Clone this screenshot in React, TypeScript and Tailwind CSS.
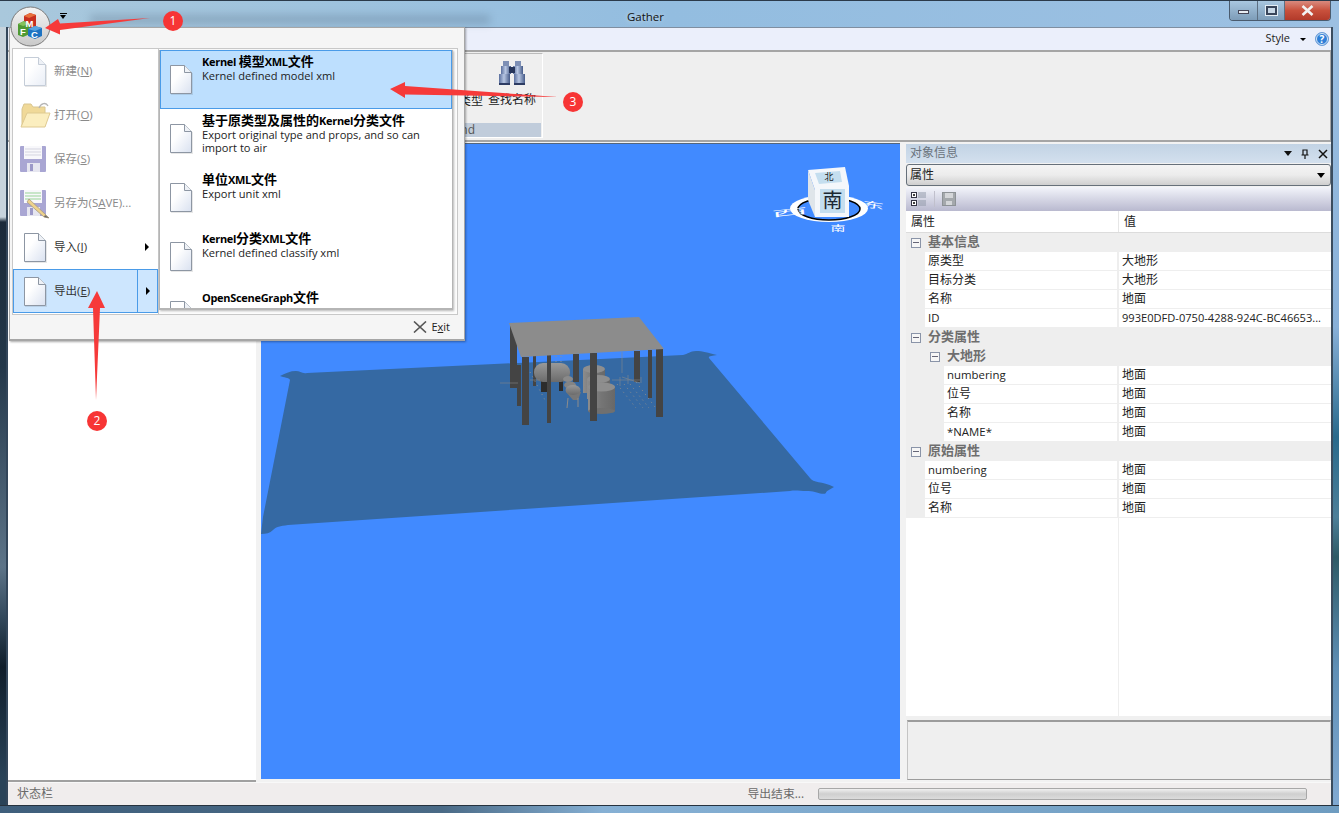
import React from "react";

const FONT = "font-['Open_Sans','Noto_Sans_CJK_SC',sans-serif]";

function Mix({ t, cjk }: { t: string; cjk: string }) {
  return (
    <>
      {t.split(/([\u4e00-\u9fff]+)/).map((s, i) =>
        i % 2 ? (
          <span key={i} className={cjk}>
            {s}
          </span>
        ) : (
          <React.Fragment key={i}>{s}</React.Fragment>
        )
      )}
    </>
  );
}

function DocIcon({ faded = false }: { faded?: boolean }) {
  const id = faded ? "docF" : "docN";
  return (
    <svg width="24" height="31" viewBox="0 0 24 31" className="shrink-0">
      <defs>
        <linearGradient id={id} x1="0" y1="0" x2="1" y2="1">
          <stop offset="0.35" stopColor="#ffffff" />
          <stop offset="1" stopColor={faded ? "#e8edf6" : "#d9e1f0"} />
        </linearGradient>
      </defs>
      <path d="M1.5 1.5H15.5L22.5 8.5V29.5H1.5Z" fill={`url(#${id})`} stroke={faded ? "#c5cdd8" : "#8d96a3"} />
      <path d="M15.5 1.5V8.5H22.5" fill="#eef1f6" stroke={faded ? "#c5cdd8" : "#8d96a3"} />
      <path d="M2 30.5H23.5V9" fill="none" stroke="#00000018" />
    </svg>
  );
}

function FolderIcon() {
  return (
    <svg width="31" height="28" viewBox="0 0 31 28" className="shrink-0">
      <path d="M2 8V25H25V6H13L11 3H4Z" fill="#f0d998" stroke="#d9c690" />
      <path d="M1 26L7 12H30L25 26Z" fill="#fbeebf" stroke="#dfca91" />
      <path d="M19 7C21 2 26 1 28 5" fill="none" stroke="#b5b5b5" strokeWidth="1.3" />
    </svg>
  );
}

function FloppyIcon({ pencil = false }: { pencil?: boolean }) {
  return (
    <svg width="32" height="31" viewBox="0 0 32 31" className="shrink-0">
      <rect x="1" y="2" width="26" height="26" rx="1" fill="#a9a6d3" />
      <rect x="5" y="2" width="18" height="13" fill="#f8f8fb" />
      <path d="M6 5H22M6 8H22M6 11H22" stroke={pencil ? "#98d398" : "#d5d5e0"} />
      <rect x="8" y="19" width="13" height="9" fill="#e6e6f0" />
      <rect x="11" y="20" width="3" height="7" fill="#9c99c8" />
      {pencil && (
        <g>
          <path d="M10 11L27 27L30 30L25 29L8 14Z" fill="#eed28c" stroke="#a89c80" strokeWidth="0.8" />
          <path d="M26 27L30 30L25 29Z" fill="#666" />
        </g>
      )}
    </svg>
  );
}

function LeftItem({ icon, children, faded = false, arrow = false, active = false }: { icon: React.ReactNode; children: React.ReactNode; faded?: boolean; arrow?: boolean; active?: boolean }) {
  return (
    <div className={`h-[44px] flex items-center relative ${active ? "bg-[#cde6fe] border border-[#4a9be8]" : "border border-transparent"}`}>
      <div className="w-[32px] ml-[6px] flex justify-center -translate-x-[1px]">{icon}</div>
      <span className={`ml-[2px] text-[11.5px] ${faded ? "text-[#8a8a8a]" : "text-[#333]"}`}>{children}</span>
      {arrow && (
        <div className={`absolute right-0 top-0 bottom-0 w-[20px] flex items-center justify-center ${active ? "border-l border-[#4a9be8]" : ""}`}>
          <div className="w-0 h-0 border-y-[4px] border-y-transparent border-l-[4px] border-l-black" />
        </div>
      )}
    </div>
  );
}

function RightItem({ title, desc, active = false, clipped = false }: { title: string; desc?: React.ReactNode; active?: boolean; clipped?: boolean }) {
  return (
    <div className={`${clipped ? "h-[23px] overflow-hidden" : "h-[59px]"} flex shrink-0 pl-[8px] ${active ? "bg-[#bddffe] border border-[#4a9be8]" : "border border-transparent"}`}>
      <div className="pt-[13px]">
        <DocIcon />
      </div>
      <div className="ml-[9px] pt-[2px] text-[#222] w-[245px]">
        <div className="font-bold leading-[16px] text-[11px] tracking-[-0.3px] text-black">
          <Mix t={title} cjk="text-[13px] tracking-normal" />
        </div>
        {desc && <div className="mt-[-1px] leading-[13px] text-[11.1px]">{desc}</div>}
      </div>
    </div>
  );
}

function Collapse() {
  return (
    <div className="w-[10px] h-[10px] border border-[#8a94a8] bg-[#f6f6f6] flex items-center justify-center shrink-0">
      <div className="w-[6px] h-[1px] bg-[#667]" />
    </div>
  );
}

function GroupRow({ label, indent = 0 }: { label: string; indent?: number }) {
  return (
    <div className="h-[19px] bg-[#eeeeee] flex items-center shrink-0" style={{ paddingLeft: 5 + indent }}>
      <Collapse />
      <span className="ml-[7px] font-bold text-[#6e6e6e] text-[13px] leading-[17px] -mt-[3px]">{label}</span>
    </div>
  );
}

function ItemRow({ name, value, gutter = 19, valueCls = "" }: { name: string; value: string; gutter?: number; valueCls?: string }) {
  return (
    <div className="h-[19px] flex shrink-0 text-[11.4px] text-[#222] border-b border-[#eeeeee] leading-[18px]">
      <div className="bg-[#eeeeee] -mb-[1px]" style={{ width: gutter }} />
      <div className="flex-1 min-w-0 pl-[3px] border-r-2 border-[#eeeeee]">
        <Mix t={name} cjk="text-[12px]" />
      </div>
      <div className={`w-[212px] pl-[3px] whitespace-nowrap overflow-hidden ${valueCls}`}>
        <Mix t={value} cjk="text-[12px]" />
      </div>
    </div>
  );
}

function Scene() {
  return (
    <svg className="w-full h-full block" viewBox="261 144 639 635">
      <defs>
        <linearGradient id="tank" x1="0" y1="0" x2="1" y2="0">
          <stop offset="0" stopColor="#8c8c8c" />
          <stop offset="0.5" stopColor="#757575" />
          <stop offset="1" stopColor="#686868" />
        </linearGradient>
        <linearGradient id="vessel" x1="0" y1="0" x2="0" y2="1">
          <stop offset="0" stopColor="#999" />
          <stop offset="1" stopColor="#6b6b6b" />
        </linearGradient>
      </defs>
      <path
        d="M290 380C289 377 284 378 280 376C286 373 290 371 296 371C300 371 302 374 307 373L683 355C688 354 690 351 696 351C703 351 708 353 717 355C712 356 708 356 709 358L810 478C813 483 822 481 834 487C829 490 826 491 826 493C822 496 815 490 807 491C800 491 795 490 790 491L288 525C280 526 276 527 273 530C270 533 266 534 261 534L263 517Z"
        fill="#3569a3"
      />
      {/* back columns */}
      <rect x="510" y="326" width="7" height="62" fill="#444" />
      <rect x="517" y="365" width="4" height="41" fill="#444" />
      <rect x="533" y="355" width="3" height="31" fill="#444" />
      <rect x="573" y="354" width="6" height="28" fill="#444" />
      <rect x="634" y="351" width="6" height="31" fill="#444" />
      <rect x="648" y="350" width="4" height="48" fill="#444" />
      {/* vessels */}
      <rect x="541" y="380" width="6" height="12" fill="#2c2c2c" />
      <rect x="559" y="380" width="4" height="11" fill="#2c2c2c" />
      <rect x="534" y="363" width="36" height="19" rx="9" fill="url(#vessel)" />
      <ellipse cx="568" cy="379" rx="5" ry="3" fill="#8a8a8a" />
      <ellipse cx="570" cy="385" rx="6" ry="3.5" fill="#848484" />
      <path d="M566 392L573 400H578L581 392Z" fill="#777" />
      <ellipse cx="573" cy="390" rx="7.5" ry="5" fill="url(#vessel)" />
      <path d="M568 398L567 408M578 398L578 407" stroke="#8c8c8c" />
      {/* tanks */}
      <rect x="583" y="369" width="22" height="24" fill="url(#tank)" />
      <ellipse cx="594" cy="369" rx="11" ry="4" fill="#8e8e8e" />
      <rect x="587" y="379" width="23" height="20" fill="url(#tank)" />
      <ellipse cx="598.5" cy="379" rx="11.5" ry="4" fill="#8e8e8e" />
      <rect x="588" y="387" width="27" height="24" fill="url(#tank)" />
      <ellipse cx="601.5" cy="411" rx="13.5" ry="3" fill="#707070" />
      <ellipse cx="601.5" cy="387" rx="13.5" ry="4.5" fill="#8e8e8e" />
      {/* pipes */}
      <g stroke="#8a8a8a" strokeWidth="0.7" fill="none" opacity="0.8">
        <path d="M500 383H518M530 380H540M612 380H640M622 377L640 383" />
        <path d="M620 377V386M628 375V384M641 377V383M622 352V373" />
      </g>
      <g stroke="#8e8e8e" strokeWidth="1" fill="none" strokeDasharray="1 4">
        <path d="M624 384L643 408M630 384L649 408M636 382L655 407M617 384L636 408" />
        <path d="M530 372L545 400M556 362V356M561 362V356" />
      </g>
      {/* front columns */}
      <rect x="522" y="357" width="7" height="68" fill="#444" />
      <rect x="547" y="355" width="4" height="68" fill="#444" />
      <rect x="590" y="353" width="7" height="68" fill="#444" />
      <rect x="656" y="349" width="7" height="68" fill="#444" />
      <polygon points="509,323 639,317 664,349 521,357" fill="#8c8c8c" />
      {/* compass */}
      <ellipse cx="829" cy="208.5" rx="39" ry="13.5" fill="#fff" />
      <ellipse cx="829" cy="209" rx="31" ry="11" fill="#418aff" stroke="#000" strokeWidth="1.5" />
      <polygon points="808,170 845,167 849,186 815,190" fill="#f4f7fb" />
      <polygon points="815,173 840,171 842,182 819,184" fill="#c4deef" />
      <polygon points="808,170 815,190 815,217 808,200" fill="#dfe5ea" />
      <rect x="815" y="186" width="34" height="31" fill="#f4f7fb" />
      <rect x="820" y="189" width="25" height="24" fill="#c4deef" />
      <text x="832.5" y="208" textAnchor="middle" fontSize="20" fill="#1c2833" fontFamily="'Noto Sans CJK SC',sans-serif">南</text>
      <text x="829" y="180" textAnchor="middle" fontSize="9" fill="#222" fontFamily="'Noto Sans CJK SC',sans-serif">北</text>
      <g fill="#fff" fontSize="8" fontFamily="'Noto Sans CJK SC',sans-serif" textAnchor="middle">
        <text x="790" y="215" textLength="36" lengthAdjust="spacingAndGlyphs" transform="rotate(-6 790 215)">西</text>
        <text x="873" y="208" textLength="22" lengthAdjust="spacingAndGlyphs" transform="rotate(8 873 208)">东</text>
        <text x="838" y="231" textLength="15" lengthAdjust="spacingAndGlyphs">南</text>
      </g>
    </svg>
  );
}

function Arrows() {
  return (
    <svg className="absolute inset-0 pointer-events-none" width="1339" height="813" viewBox="0 0 1339 813">
      <polygon points="150,18 60,23.5 58,19 45,28 60,34.5 60,30" fill="#f63a3a" />
      <polygon points="96,400 100,308 105,308 97,291 88,308 93,308" fill="#f63a3a" />
      <polygon points="558,97 405,86 405,82 390,89 405,98 405,94.5" fill="#f63a3a" />
    </svg>
  );
}

function Badge({ n, cls }: { n: number; cls: string }) {
  return (
    <div className={`absolute w-[20px] h-[20px] rounded-full bg-[#f73535] text-white text-[12px] flex items-center justify-center ${cls}`}>{n}</div>
  );
}

function AppMenu() {
  return (
    <div className="absolute left-[9px] top-[27px] w-[456px] h-[314px] bg-[#f5f5f5] border border-[#a6a6a6] border-b-2 shadow-[1px_1px_2px_#0005] flex flex-col">
      <div className="h-[20px] shrink-0" />
      <div className="flex h-[267px] ml-[2px] mr-[3px] shrink-0 items-start">
        <div className="w-[146px] h-[267px] bg-white border border-[#c8c8c8] border-r-0 shrink-0">
          <LeftItem icon={<DocIcon faded />} faded>
            新建(<u>N</u>)
          </LeftItem>
          <LeftItem icon={<FolderIcon />} faded>
            打开(<u>O</u>)
          </LeftItem>
          <LeftItem icon={<FloppyIcon />} faded>
            保存(<u>S</u>)
          </LeftItem>
          <LeftItem icon={<FloppyIcon pencil />} faded>
            另存为(S<u>A</u>VE)...
          </LeftItem>
          <LeftItem icon={<DocIcon />} arrow>
            导入(<u>I</u>)
          </LeftItem>
          <LeftItem icon={<DocIcon />} arrow active>
            导出(<u>E</u>)
          </LeftItem>
        </div>
        <div className="w-[300px] h-[267px] bg-[#fcfcfc] border border-[#c8c8c8] pt-[1px] pr-[4px] pb-[4px] shrink-0 relative">
          <div className="h-full bg-white border-l border-[#b5b5b5] border-r border-b-2 shadow-[1px_1px_2px_#0004] flex flex-col overflow-hidden">
            <RightItem active title="Kernel 模型XML文件" desc="Kernel defined model xml" />
            <RightItem title="基于原类型及属性的Kernel分类文件" desc={<>Export original type and props, and so can<br />import to air</>} />
            <RightItem title="单位XML文件" desc="Export unit xml" />
            <RightItem title="Kernel分类XML文件" desc="Kernel defined classify xml" />
            <RightItem clipped title="OpenSceneGraph文件" />
          </div>
        </div>
      </div>
      <div className="flex-1 flex items-center justify-end pr-[14px] text-[11px] text-[#222] gap-[4px]">
        <svg width="14" height="12" viewBox="0 0 14 12">
          <path d="M1 0.5L13 11.5M13 0.5L1 11.5" stroke="#555" strokeWidth="1.6" />
        </svg>
        <span>
          E<u>x</u>it
        </span>
      </div>
    </div>
  );
}

function AppButton() {
  return (
    <svg className="absolute left-[10px] top-[6px]" width="41" height="41" viewBox="0 0 41 41">
      <defs>
        <linearGradient id="orb" x1="0" y1="0" x2="0" y2="1">
          <stop offset="0" stopColor="#f4f4f4" />
          <stop offset="1" stopColor="#c9c9c9" />
        </linearGradient>
      </defs>
      <circle cx="20.5" cy="20.5" r="19.5" fill="url(#orb)" stroke="#7a7a7a" />
      <polygon points="14,10 20,7 26,9 26,20 19,23 14,21" fill="#c83020" />
      <polygon points="14,10 20,7 26,9 19,12" fill="#e8703c" />
      <polygon points="8,18 14,15 20,18 20,28 13,31 8,29" fill="#4f9a33" />
      <polygon points="8,18 14,15 20,18 13,20" fill="#86c25c" />
      <polygon points="18,23 25,20 32,22 32,30 25,33 18,30" fill="#1d73c2" />
      <polygon points="18,23 25,20 32,22 25,25" fill="#5aa5e0" />
      <g fontFamily="'Liberation Sans',sans-serif" fontWeight="700" fill="#fff" fontSize="9.5" textAnchor="middle">
        <text x="19.5" y="20.5">M</text>
        <text x="13" y="28.5">F</text>
        <text x="24.5" y="31.5">C</text>
      </g>
    </svg>
  );
}

function Binoculars() {
  return (
    <svg width="28" height="25" viewBox="0 0 28 25">
      <defs>
        <linearGradient id="bino" x1="0" y1="0" x2="1" y2="0">
          <stop offset="0" stopColor="#5a6f9e" />
          <stop offset="0.45" stopColor="#b7c6e2" />
          <stop offset="1" stopColor="#455a88" />
        </linearGradient>
      </defs>
      <rect x="5" y="0" width="6" height="5" fill="#7d8fb5" />
      <rect x="17" y="0" width="6" height="5" fill="#7d8fb5" />
      <rect x="3" y="5" width="10" height="8" fill="url(#bino)" />
      <rect x="15" y="5" width="10" height="8" fill="url(#bino)" />
      <rect x="11" y="6" width="6" height="6" fill="#26355a" />
      <rect x="1" y="13" width="11" height="11" fill="url(#bino)" />
      <rect x="16" y="13" width="11" height="11" fill="url(#bino)" />
      <rect x="1" y="22" width="11" height="2" fill="#2d3c63" />
      <rect x="16" y="22" width="11" height="2" fill="#2d3c63" />
    </svg>
  );
}

export default function App() {
  return (
    <div className={`relative w-[1339px] h-[813px] overflow-hidden flex flex-col ${FONT}`}>
      {/* Title bar */}
      <div className="h-[27px] shrink-0 flex bg-gradient-to-r from-[#a9c8dc] via-[#93bde0] to-[#9cc0e2] border-t border-[#2b3a4a] relative">
        <div className="absolute left-[90px] top-[14px] w-[400px] h-[9px] bg-[#51667c] opacity-30 blur-[4px]" />
        <div className="flex-1 text-center text-[11.5px] text-[#111] pt-[7px] pl-[62px] relative [text-shadow:0_0_5px_#ffffff99]">Gather</div>
        <div className="flex h-[20px] mr-[8px] w-[102px] border border-t-0 border-[#4a5b6e] rounded-b-[4px] overflow-hidden relative">
          <div className="w-[28px] border-r border-[#5d6f82] bg-gradient-to-b from-[#a9c7e0] to-[#7d9cb8] flex items-center justify-center">
            <div className="w-[11px] h-[4px] mt-[3px] bg-[#e8edf3] border border-[#445]" />
          </div>
          <div className="w-[27px] border-r border-[#5d6f82] bg-gradient-to-b from-[#a9c7e0] to-[#7d9cb8] flex items-center justify-center">
            <div className="w-[11px] h-[9px] border-2 border-[#39455a] bg-[#c9d8e6] outline outline-[#e4edf5]" />
          </div>
          <div className="flex-1 bg-gradient-to-b from-[#d98a7e] via-[#c8503c] to-[#b23a2a] flex items-center justify-center">
            <svg width="13" height="11" viewBox="0 0 13 11">
              <path d="M1.5 1L11.5 10M11.5 1L1.5 10" stroke="#f2f2f2" strokeWidth="2.6" />
            </svg>
          </div>
        </div>
      </div>

      <div className="flex-1 min-h-0 flex">
        {/* Left frame */}
        <div className="w-[8px] shrink-0 bg-[linear-gradient(180deg,#c7d3dc_0px,#c7d3dc_190px,#1b2a39_195px,#24384a_340px,#5d7488_540px,#33495c_590px,#0f1d2a_640px,#2a4358_750px)] border-r-2 border-[#33465a]" />
        {/* Inner client area */}
        <div className="flex-1 min-w-0 flex flex-col">
          {/* Tab strip */}
          <div className="h-[23px] shrink-0 bg-[#ebeffb] border-t border-[#7f8ea0] flex items-center justify-end pr-[2px] text-[11px] text-[#222]">
            <span className="-mt-[1px]">Style</span>
            <div className="ml-[10px] w-0 h-0 border-x-[3px] border-x-transparent border-t-[3px] border-t-black" />
            <div className="ml-[9px] w-[14px] h-[14px] rounded-full bg-[#2f7fd8] border border-[#6f9fd8] outline outline-[#d8e6f5] -outline-offset-2 text-white text-[10px] font-bold flex items-center justify-center">?</div>
          </div>
          {/* Ribbon */}
          <div className="h-[92px] shrink-0 bg-[#efefef] border-y-2 border-[#a5a5a5] border-r pt-[1px] pb-[1px]">
            <div className="ml-[292px] w-[243px] h-[85px] border border-t-[#bbb] border-l-[#bbb] border-r-white border-b-white flex flex-col">
              <div className="flex-1 flex justify-end pr-[6px] gap-[5px] text-[12px] text-[#222] pt-[7px]">
                <div className="flex flex-col items-center">
                  <div className="h-[25px]" />
                  <div className="mt-[6px]">查找类型</div>
                </div>
                <div className="flex flex-col items-center">
                  <Binoculars />
                  <div className="mt-[5px]">查找名称</div>
                </div>
              </div>
              <div className="h-[14px] bg-[#c0ccdb] text-[12px] text-[#555] leading-[14px] text-right pr-[66px] mr-[1px]">Command</div>
            </div>
          </div>

          {/* Main */}
          <div className="flex-1 min-h-0 flex bg-[#f2f2f2]">
            <div className="w-[248px] shrink-0 bg-white border-b-2 border-[#a0a0a0]" />
            <div className="w-[5px] shrink-0 bg-[#f2f2f2]" />
            <div className="w-[639px] shrink-0 pt-[1px] pb-[3px]">
              <div className="w-full h-[636px] bg-[#418aff] border-t border-[#55667c]">
                <Scene />
              </div>
            </div>
            <div className="flex-1 min-w-0 ml-[6px] flex flex-col pt-[2px] pb-[2px]">
              <div className="h-[19px] shrink-0 bg-gradient-to-b from-[#c2d3e4] to-[#d3e0ee] flex items-center pl-[4px] pr-[3px] text-[12px] leading-[16px] text-[#6a737c]">
                <span className="flex-1 -mt-[2px]">对象信息</span>
                <div className="w-0 h-0 border-x-[4px] border-x-transparent border-t-[5px] border-t-[#111]" />
                <svg width="10" height="10" viewBox="0 0 10 10" className="ml-[8px]">
                  <path d="M3 1H7V6H3ZM1.5 6H8.5M5 6V10" stroke="#111" fill="none" strokeWidth="1.2" />
                </svg>
                <svg width="10" height="10" viewBox="0 0 10 10" className="ml-[8px]">
                  <path d="M1 1L9 9M9 1L1 9" stroke="#111" strokeWidth="1.5" />
                </svg>
              </div>
              <div className="h-[22px] shrink-0 mt-[1px] rounded-[3px] border border-[#66707a] bg-gradient-to-b from-[#f4f4f4] via-[#ececec] to-[#cfcfcf] flex items-center pl-[3px] pr-[5px] text-[12px] text-[#222]">
                <span className="flex-1">属性</span>
                <div className="w-0 h-0 border-x-[4px] border-x-transparent border-t-[5px] border-t-black" />
              </div>
              <div className="h-[24px] shrink-0 bg-gradient-to-b from-[#f3f5fb] to-[#b9b9cf] flex items-center pl-[5px] mt-[1px]">
                <svg width="16" height="16" viewBox="0 0 16 16">
                  <rect x="0.5" y="1.5" width="5" height="5" fill="#fff" stroke="#334" />
                  <rect x="0.5" y="9.5" width="5" height="5" fill="#fff" stroke="#334" />
                  <path d="M2 4H4M3 3V5M2 12H4M3 11V13" stroke="#000" />
                  <path d="M7 2H15M7 4H15M7 6H15M7 10H15M7 12H15M7 14H15" stroke="#9098a8" />
                </svg>
                <div className="w-[1px] h-[16px] bg-[#c0c0cc] ml-[7px]" />
                <svg width="14" height="14" viewBox="0 0 14 14" className="ml-[7px]">
                  <rect x="0.5" y="0.5" width="13" height="13" fill="#a4a8ac" stroke="#8d9296" />
                  <rect x="3" y="1" width="8" height="5" fill="#d4d6d9" />
                  <rect x="4" y="9" width="6" height="4" fill="#d4d6d9" />
                </svg>
              </div>
              <div className="h-[22px] shrink-0 bg-white flex text-[12px] text-[#222] border-b border-[#dcdcdc] leading-[22px]">
                <div className="w-[213px] pl-[5px] border-r border-[#e6e6e6]">属性</div>
                <div className="pl-[5px]">值</div>
              </div>
              <div className="flex-1 min-h-0 bg-white flex flex-col relative">
                <div className="absolute left-[212px] top-0 bottom-0 w-[1px] bg-[#eeeeee]" />
                <div className="relative flex flex-col">
                  <GroupRow label="基本信息" />
                  <ItemRow name="原类型" value="大地形" />
                  <ItemRow name="目标分类" value="大地形" />
                  <ItemRow name="名称" value="地面" />
                  <ItemRow name="ID" value="993E0DFD-0750-4288-924C-BC46653..." valueCls="text-[11.1px]" />
                  <GroupRow label="分类属性" />
                  <GroupRow label="大地形" indent={19} />
                  <ItemRow gutter={38} name="numbering" value="地面" />
                  <ItemRow gutter={38} name="位号" value="地面" />
                  <ItemRow gutter={38} name="名称" value="地面" />
                  <ItemRow gutter={38} name="*NAME*" value="地面" />
                  <GroupRow label="原始属性" />
                  <ItemRow name="numbering" value="地面" />
                  <ItemRow name="位号" value="地面" />
                  <ItemRow name="名称" value="地面" />
                </div>
              </div>
              <div className="h-[4px] shrink-0 bg-[#f0f0f0]" />
              <div className="h-[60px] shrink-0 ml-[1px] bg-[#efefef] border border-[#c4c4c4] border-t-2 border-t-[#9c9c9c] border-b-[#9c9c9c]" />
            </div>
          </div>

          {/* Status bar */}
          <div className="h-[23px] shrink-0 bg-[#f0eded] border-t border-[#f8f8f8] flex items-center text-[12px] text-[#6a6a6a] relative">
            <span className="ml-[9px] flex-1">状态栏</span>
            <span className="mr-[14px] text-[11.8px]">导出结束...</span>
            <div className="w-[489px] h-[12px] mr-[24px] rounded-[2px] border border-[#a8a8a8] bg-gradient-to-b from-[#f0f0f0] via-[#cfcfcf] to-[#dcdcdc]" />
          </div>
        </div>
        {/* Right frame */}
        <div className="w-[8px] shrink-0 bg-[linear-gradient(180deg,#9cc0e2_0px,#88b0d8_300px,#2a6a8c_410px,#4d7f99_490px,#2e5a66_530px,#5f8fb5_640px,#7fa8d0_770px)] border-l-2 border-[#3a4c5e]" />
      </div>
      <div className="h-[8px] shrink-0 bg-[linear-gradient(90deg,#3f5f7c_0%,#4a6a86_33%,#86b0d4_45%,#6e9cc0_100%)] border-t border-[#26323e]" />

      {/* Overlays */}
      <AppMenu />
      <AppButton />
      <div className="absolute left-[60px] top-[13px] w-[7px] h-[1px] bg-black" />
      <div className="absolute left-[60px] top-[15px] w-0 h-0 border-x-[3.5px] border-x-transparent border-t-[4px] border-t-black" />
      <Arrows />
      <Badge n={1} cls="left-[163px] top-[11px]" />
      <Badge n={2} cls="left-[87px] top-[411px]" />
      <Badge n={3} cls="left-[563px] top-[92px]" />
    </div>
  );
}
